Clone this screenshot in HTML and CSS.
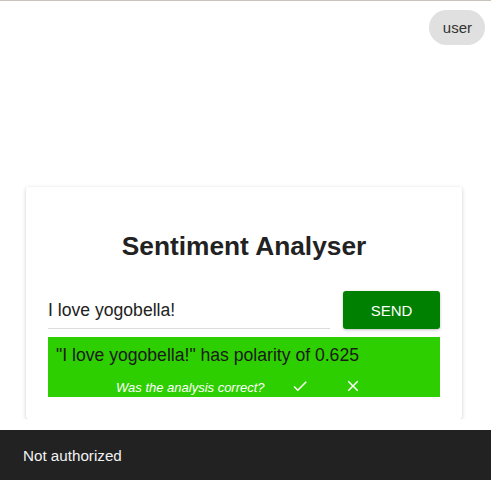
FILE: index.html
```html
<!DOCTYPE html>
<html>
<head>
<meta charset="utf-8">
<link rel="stylesheet" href="styles.css">
</head>
<body>
<div class="topline"></div>
<div class="userbar"><span class="chip">user</span></div>
<div class="card">
  <h1 class="title">Sentiment Analyser</h1>
  <div class="row">
    <div class="field"><span class="field-text">I love yogobella!</span></div>
    <button class="send">SEND</button>
  </div>
  <div class="result">
    <div class="result-text">"I love yogobella!" has polarity of 0.625</div>
    <div class="feedback">
      <span class="question">Was the analysis correct?</span>
      <svg class="icon icon-check" viewBox="0 0 24 24"><path d="M9 16.17L4.83 12l-1.42 1.41L9 19 21 7l-1.41-1.41z" fill="#fff"/></svg>
      <svg class="icon icon-close" viewBox="0 0 24 24"><path d="M19 6.41L17.59 5 12 10.59 6.41 5 5 6.41 10.59 12 5 17.59 6.41 19 12 13.41 17.59 19 19 17.59 13.41 12z" fill="#fff"/></svg>
    </div>
  </div>
</div>
<div class="snackbar">Not authorized</div>
</body>
</html>
```
FILE: styles.css
```css
html, body {
  margin: 0;
  padding: 0;
  background: #fff;
  font-family: "Liberation Sans", Arial, sans-serif;
}
.topline {
  height: 1px;
  background: #c8c4bc;
}
.userbar {
  display: flex;
  justify-content: flex-end;
  padding: 9px 6px 0 0;
}
.chip {
  display: flex;
  align-items: center;
  height: 35px;
  padding: 0 13px 0 14px;
  border-radius: 18px;
  background: #e0e0e0;
  color: #333;
  font-size: 15px;
}
.card {
  margin: 142px 0 0 26px;
  width: 392px;
  padding: 22px 22px 22px 22px;
  background: #fff;
  border-radius: 2px;
  box-shadow: 0 1px 4px rgba(0,0,0,0.18), 0 1px 1px rgba(0,0,0,0.10);
}
.title {
  margin: 22px 0 30px;
  font-size: 26.3px;
  font-weight: bold;
  text-align: center;
  color: #222;
  line-height: 30px;
}
.row {
  display: flex;
  gap: 13px;
}
.field {
  width: 282px;
  padding: 9px 0 6px;
  border-bottom: 1px solid #dcdcdc;
}
.field-text {
  display: block;
  font-size: 17.6px;
  line-height: 21px;
  color: #222;
}
.send {
  width: 97px;
  height: 38px;
  border: none;
  border-radius: 3px;
  background: #008000;
  color: #fff;
  font-family: "Liberation Sans", Arial, sans-serif;
  font-size: 15px;
  box-shadow: 0 1px 3px rgba(0,0,0,0.25);
  padding: 0;
}
.result {
  margin-top: 8px;
  height: 60px;
  box-sizing: border-box;
  padding: 8px 0 0 8px;
  background: #2ecf00;
}
.result-text {
  font-size: 17.6px;
  line-height: 21px;
  color: #1a1a1a;
}
.feedback {
  display: flex;
  align-items: center;
  margin-top: 11px;
  padding-left: 60px;
  height: 18px;
}
.question {
  font-size: 13px;
  font-style: italic;
  color: #fff;
  line-height: 15px;
  margin-top: 3px;
}
.icon {
  width: 18px;
  height: 18px;
}
.icon-check {
  margin-left: 26px;
}
.icon-close {
  margin-left: 35px;
}
.snackbar {
  position: fixed;
  left: 0;
  right: 0;
  bottom: 0;
  height: 50px;
  display: flex;
  align-items: center;
  padding-left: 23px;
  background: #222;
  color: #f2f2f2;
  font-size: 15.2px;
}
```
